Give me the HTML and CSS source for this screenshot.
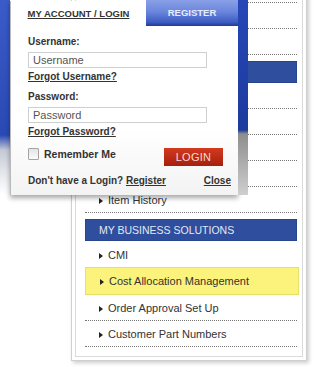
FILE: index.html
```html
<!DOCTYPE html>
<html lang="en">
<head>
    <meta charset="UTF-8">
    <meta name="viewport" content="width=device-width, initial-scale=1.0">
    <title>My Account / Login</title>
    <link rel="stylesheet" href="styles.css">
</head>
<body>
    <div class="page">
        <div class="panel">
            <div class="panel-inner">
                <!-- верхняя часть меню закрыта окном входа -->
                <ul class="menu">
                    <li class="menu-item"></li>
                    <li class="menu-item"></li>
                    <li class="menu-item"></li>
                </ul>
                <div class="menu-head"></div>
                <ul class="menu">
                    <li class="menu-item"></li>
                    <li class="menu-item"></li>
                    <li class="menu-item"></li>
                    <li class="menu-item"></li>
                    <li class="menu-item"><span class="arrow"></span>Item History</li>
                </ul>
                <div class="menu-head">MY BUSINESS SOLUTIONS</div>
                <ul class="menu">
                    <li class="menu-item no-line"><span class="arrow"></span>CMI</li>
                    <li class="menu-item active"><span class="arrow"></span>Cost Allocation Management</li>
                    <li class="menu-item"><span class="arrow"></span>Order Approval Set Up</li>
                    <li class="menu-item"><span class="arrow"></span>Customer Part Numbers</li>
                </ul>
            </div>
        </div>

        <div class="login-popup">
            <div class="tabs">
                <div class="tab tab-active"><span>MY ACCOUNT / LOGIN</span></div>
                <div class="tab tab-register">REGISTER</div>
            </div>
            <form class="login-form" id="loginForm">
                <label for="username">Username:</label>
                <input type="text" id="username" value="Username" />
                <a class="link" href="#">Forgot Username?</a>

                <label for="password" class="second">Password:</label>
                <input type="text" id="password" value="Password" />
                <a class="link" href="#">Forgot Password?</a>

                <div class="row">
                    <div class="remember">
                        <input type="checkbox" id="remember" />
                        <label for="remember">Remember Me</label>
                    </div>
                    <button type="submit">LOGIN</button>
                </div>

                <div class="row bottom">
                    <span>Don't have a Login? <a class="link" href="#">Register</a></span>
                    <a class="link" href="#">Close</a>
                </div>
            </form>
        </div>
    </div>
</body>
</html>
```

FILE: styles.css
```css
body {
    margin: 0;
    font-family: "Liberation Sans", Arial, sans-serif;
    color: #333;
    background: #fff;
}

.page {
    position: relative;
    width: 320px;
    height: 367px;
    overflow: hidden;
    background: linear-gradient(to bottom, #3a5bc9 0, #2a49b4 135px, #c4c9d6 150px, #e4e6ec 172px, #fff 195px) no-repeat 0 0 / 10px 200px;
}

/* side menu */
.panel {
    margin: -30px 0 0 71px;
    width: 236px;
    box-sizing: border-box;
    padding: 3px;
    background: #fff;
    border: 1px solid #cfcfcf;
    box-shadow: 2px 2px 4px rgba(0, 0, 0, 0.2);
}

.panel-inner {
    border: 1px solid #dadada;
    padding: 2px 5px 9px 9px;
}

.menu {
    list-style: none;
    margin: 0;
    padding: 0;
}

.menu-item {
    height: 25px;
    line-height: 27px;
    border-bottom: 1px dotted #777;
    padding-left: 14px;
    font-size: 11px;
    color: #333;
}

    .menu-item.no-line {
        border-bottom-color: transparent;
        line-height: 28px;
    }

    .menu-item.active {
        height: 26px;
        margin: 0 -2px 0 0;
        background: #fbf37c;
        border: 1px solid #e9e06a;
        line-height: 27px;
    }

.arrow {
    display: inline-block;
    width: 0;
    height: 0;
    border-top: 3px solid transparent;
    border-bottom: 3px solid transparent;
    border-left: 4px solid #222;
    margin-right: 5px;
    vertical-align: 0;
}

.menu-head {
    margin-top: 6px;
    height: 20px;
    line-height: 21px;
    padding-left: 13px;
    background: #2f4f9e;
    border: 1px solid #27458f;
    color: #e3e8f4;
    font-size: 10.5px;
}

/* login popup */
.login-popup {
    position: absolute;
    top: 0;
    left: 10px;
    width: 228px;
    box-shadow: 0 3px 5px rgba(0, 0, 0, 0.35);
}

    .login-popup::after {
        content: "";
        position: absolute;
        top: 0;
        right: -10px;
        width: 10px;
        height: 195px;
        background: linear-gradient(to bottom, #2647b6 0, #1d3a9e 130px, #8e8e8e 134px, #cfcfcf 195px);
    }

.tabs {
    display: flex;
    height: 26px;
}

.tab {
    display: flex;
    align-items: center;
    justify-content: center;
    font-size: 9.5px;
    font-weight: bold;
}

.tab-active {
    width: 136px;
    background: #fff;
    border-left: 1px solid #b9b9b9;
    box-sizing: border-box;
    margin-top: 1px;
}

    .tab-active span {
        text-decoration: underline;
        color: #333;
    }

.tab-register {
    flex: 1;
    padding-bottom: 2px;
    background: linear-gradient(to bottom, #8aa0e8 0, #6a86dc 45%, #3d5cc3 85%, #23398f 100%);
    color: #e6ecff;
}

.login-form {
    margin: 0;
    padding: 10px 7px 8px 17px;
    background: linear-gradient(to bottom, #fff 60%, #f3f3f3 100%);
    border-left: 1px solid #b9b9b9;
    font-size: 10px;
}

    .login-form label {
        display: block;
        font-weight: bold;
        line-height: 12px;
        color: #333;
    }

        .login-form label.second {
            margin-top: 8px;
        }

    .login-form input[type="text"] {
        display: block;
        width: 179px;
        height: 16px;
        margin-top: 4px;
        padding: 0 4px;
        box-sizing: border-box;
        border: 1px solid #cfcfcf;
        font-family: "Liberation Sans", Arial, sans-serif;
        font-size: 11px;
        color: #555;
    }

.link {
    display: inline-block;
    margin-top: 3px;
    line-height: 12px;
    font-weight: bold;
    color: #333;
    text-decoration: underline;
}

.row {
    display: flex;
    justify-content: space-between;
    align-items: flex-start;
    margin-top: 10px;
}

.remember {
    display: flex;
    align-items: center;
}

    .remember input {
        appearance: none;
        width: 11px;
        height: 12px;
        margin: 0 5px 0 0;
        border: 1px solid #a4a4a4;
        border-radius: 1px;
        background: linear-gradient(to bottom, #e4e4e4, #fbfbfb);
    }

    .remember label {
        font-size: 10.5px;
    }

button {
    width: 59px;
    height: 18px;
    margin-right: 8px;
    padding: 0;
    border: none;
    background: linear-gradient(to bottom, #d23a1f 0, #b82a14 60%, #a4200e 100%);
    color: #f6ddd6;
    font-family: "Liberation Sans", Arial, sans-serif;
    font-size: 11px;
    letter-spacing: 0.3px;
    cursor: pointer;
}

.row.bottom {
    margin-top: 9px;
    align-items: center;
    font-weight: bold;
    line-height: 12px;
}

    .row.bottom .link {
        margin-top: 0;
    }
```
